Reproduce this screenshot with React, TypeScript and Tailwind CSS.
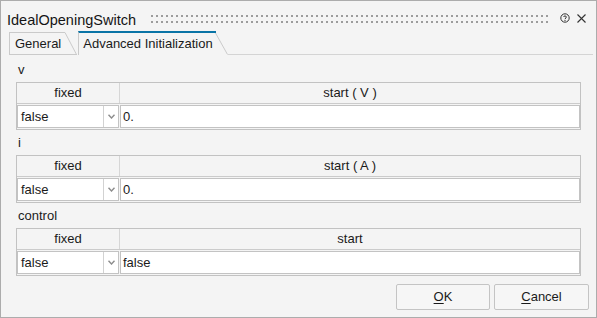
import React from "react";

const font = { fontFamily: '"Liberation Sans", Arial, sans-serif' };

function Dots() {
  return (
    <svg className="flex-1 h-[8px]" height="8">
      <defs>
        <pattern id="grip" width="5" height="6" patternUnits="userSpaceOnUse">
          <rect x="0" y="0" width="2" height="2" fill="#9c9c9c" />
        </pattern>
      </defs>
      <rect x="0" y="0" width="100%" height="8" fill="url(#grip)" />
    </svg>
  );
}

function Chevron() {
  return (
    <svg width="7" height="5" viewBox="0 0 7 5">
      <path d="M0.5 0.8 L3.5 4 L6.5 0.8" fill="none" stroke="#8c8c8c" strokeWidth="1.4" />
    </svg>
  );
}

interface Row {
  label: string;
  start: string;
  value: string;
}

const rows: Row[] = [
  { label: "v", start: "start ( V )", value: "0." },
  { label: "i", start: "start ( A )", value: "0." },
  { label: "control", start: "start", value: "false" },
];

function ParamTable({ row, first }: { row: Row; first?: boolean }) {
  return (
    <div className={first ? "pt-[7px]" : "pt-[5px]"}>
      <div className="h-[16px] leading-[16px] pl-[2px] mb-[4px]">{row.label}</div>
      <div className="border border-[#c2c2c2] bg-[#f4f4f4]">
        <div className="flex h-[21px] border-b border-[#cbcbcb] leading-[20px]">
          <div className="w-[103px] border-r border-[#d6d6d6] text-center">fixed</div>
          <div className="flex-1 text-center">{row.start}</div>
        </div>
        <div className="flex h-[25px] py-px gap-px">
          <div className="w-[102px] flex border border-[#c3c3c3] bg-white">
            <span className="flex-1 pl-[3px] leading-[21px]">false</span>
            <span className="w-[15px] border-l border-[#d2d2d2] flex items-center justify-center">
              <Chevron />
            </span>
          </div>
          <div className="flex-1 border border-[#c3c3c3] bg-white pl-[2px] leading-[21px]">{row.value}</div>
        </div>
      </div>
    </div>
  );
}

export default function App() {
  return (
    <div
      className="w-[597px] h-[318px] border border-[#acacac] bg-[#f4f4f4] flex flex-col text-[13px] text-[#1a1a1a]"
      style={font}
    >
      {/* title bar */}
      <div className="h-[30px] pt-[8px] flex items-center pl-[6px] pr-[10px]">
        <span className="text-[14.5px] leading-[22px] text-[#141414]">IdealOpeningSwitch</span>
        <div className="flex-1 flex ml-[15px] mr-[12px] pb-[2px]">
          <Dots />
        </div>
        <div className="flex items-center gap-[7px] pb-[4px]">
          <svg width="10" height="10" viewBox="0 0 10 10">
            <circle cx="5" cy="5" r="4.2" fill="none" stroke="#333" strokeWidth="1" />
            <path d="M3.6 4 C3.6 2.6 6.4 2.6 6.4 4 C6.4 5 5 5 5 6.2" fill="none" stroke="#333" strokeWidth="1" />
            <rect x="4.5" y="7" width="1" height="1" fill="#333" />
          </svg>
          <svg width="9" height="9" viewBox="0 0 9 9">
            <path d="M0.5 0.5 L8.5 8.5 M8.5 0.5 L0.5 8.5" stroke="#333" strokeWidth="1.1" />
          </svg>
        </div>
      </div>

      {/* tabs */}
      <div className="flex items-end h-[24px] pl-[8px] pr-[3px]">
        <div className="flex h-[23px]">
          <div className="border-l border-t border-b border-[#cacaca] pl-[5px] pr-[4px] leading-[21px]">General</div>
          <svg width="12" height="23" viewBox="0 0 12 23">
            <path d="M0 0.5 L11.5 22.5" stroke="#cacaca" strokeWidth="1" />
            <path d="M0 22.5 L12 22.5" stroke="#cacaca" strokeWidth="1" />
          </svg>
        </div>
        <div className="flex h-[24px] ml-px">
          <div className="border-l border-[#cacaca] border-t-2 border-t-[#0a74a6] pl-[4px] pr-[2px] leading-[21px]">
            Advanced Initialization
          </div>
          <svg width="13" height="24" viewBox="0 0 13 24">
            <path d="M0 1 L1 1" stroke="#0a74a6" strokeWidth="2" />
            <path d="M0.5 2 L12.5 23.5" stroke="#cacaca" strokeWidth="1" />
          </svg>
        </div>
        <div className="flex-1 border-b border-[#d4d4d4]" />
      </div>

      {/* content */}
      <div className="px-[15px]">
        {rows.map((r, i) => (
          <ParamTable key={r.label} row={r} first={i === 0} />
        ))}
      </div>

      {/* buttons */}
      <div className="mt-auto flex justify-end gap-[4px] pr-[7px] pb-[7px]">
        <button className="w-[94px] h-[26px] border border-[#c4c4c4] rounded-[2px] bg-[#f6f6f6]">
          <span className="underline underline-offset-2">O</span>K
        </button>
        <button className="w-[95px] h-[26px] border border-[#c4c4c4] rounded-[2px] bg-[#f6f6f6]">
          <span className="underline underline-offset-2">C</span>ancel
        </button>
      </div>
    </div>
  );
}
